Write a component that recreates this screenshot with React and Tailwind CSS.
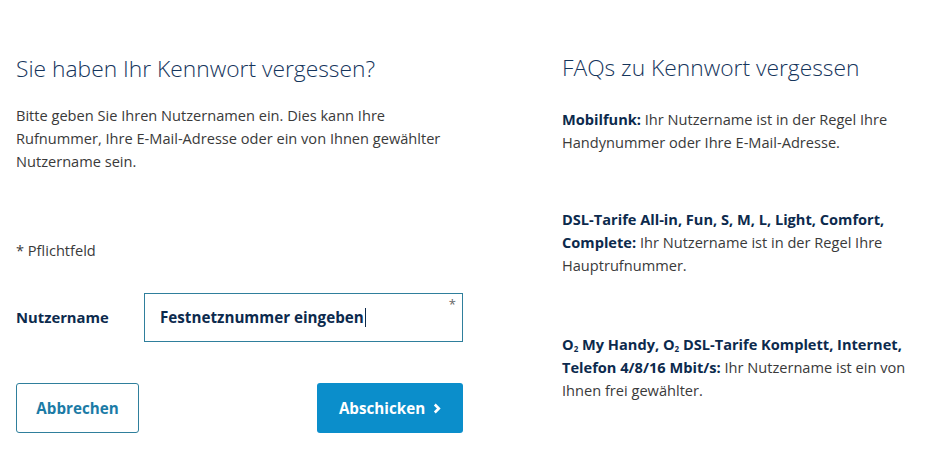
import React from "react";

const font = { fontFamily: '"Open Sans", "Noto Sans", sans-serif' };

const FaqItem = ({ title, children, className = "" }) => (
  <p className={"text-[14.6px] leading-[23px] text-[#3a3a3a] " + className}>
    <span className="font-bold text-[#0c2a4d]">{title}</span> {children}
  </p>
);

export default function App() {
  return (
    <div
      className="w-[929px] h-[454px] bg-white flex overflow-hidden font-['Open_Sans',_'Noto_Sans',_sans-serif]"
      style={font}
    >
      {/* Formular */}
      <div className="ml-4 w-[447px] pt-[54px] flex flex-col">
        <h1 className="text-[22.8px] leading-[30px] font-light text-[#15355c] whitespace-nowrap">
          Sie haben Ihr Kennwort vergessen?
        </h1>
        <p className="mt-[20px] text-[14.6px] leading-[23px] text-[#3a3a3a] whitespace-nowrap">
          Bitte geben Sie Ihren Nutzernamen ein. Dies kann Ihre
          <br />
          Rufnummer, Ihre E-Mail-Adresse oder ein von Ihnen gewählter
          <br />
          Nutzername sein.
        </p>
        <p className="mt-[66px] text-[14.6px] leading-[23px] text-[#3a3a3a]">* Pflichtfeld</p>

        <div className="mt-[31px] flex items-center">
          <label className="w-[128px] text-[14.8px] font-bold text-[#0c2a4d]">Nutzername</label>
          <div className="relative w-[319px] h-[49px] border border-[#2f7f9c] flex items-center pl-[15px]">
            <span className="text-[15.2px] font-bold text-[#0c2a4d]">Festnetznummer eingeben</span>
            <span className="w-px h-[19px] bg-[#0c2a4d] ml-px" />
            <span className="absolute right-[6px] top-[4px] text-[13px] leading-none text-[#666]">*</span>
          </div>
        </div>

        <div className="mt-[41px] flex justify-between">
          <button className="w-[123px] h-[50px] border border-[#2f7f9c] rounded-[3px] text-[15.2px] font-bold text-[#1b7ba6]">
            Abbrechen
          </button>
          <button className="w-[146px] h-[50px] rounded-[3px] bg-[#0b8ecb] text-white text-[15.2px] font-bold flex items-center justify-center gap-[8px]">
            Abschicken
            <svg width="8" height="11" viewBox="0 0 8 11" fill="none">
              <path d="M1.8 1.5 L5.8 5.5 L1.8 9.5" stroke="white" strokeWidth="2.6" />
            </svg>
          </button>
        </div>
      </div>

      {/* FAQs */}
      <div className="ml-[99px] pt-[53px] flex flex-col whitespace-nowrap">
        <h2 className="text-[22.8px] leading-[30px] font-light text-[#15355c]">
          FAQs zu Kennwort vergessen
        </h2>
        <FaqItem title="Mobilfunk:" className="mt-[25px]">
          Ihr Nutzername ist in der Regel Ihre
          <br />
          Handynummer oder Ihre E-Mail-Adresse.
        </FaqItem>
        <FaqItem
          title={
            <>
              DSL-Tarife All-in, Fun, S, M, L, Light, Comfort,
              <br />
              Complete:
            </>
          }
          className="mt-[54px]"
        >
          Ihr Nutzername ist in der Regel Ihre
          <br />
          Hauptrufnummer.
        </FaqItem>
        <FaqItem
          title={
            <>
              O<sub className="text-[8px]">2</sub> My Handy, O<sub className="text-[8px]">2</sub> DSL-Tarife
              Komplett, Internet,
              <br />
              Telefon 4/8/16 Mbit/s:
            </>
          }
          className="mt-[56px]"
        >
          Ihr Nutzername ist ein von
          <br />
          Ihnen frei gewählter.
        </FaqItem>
      </div>
    </div>
  );
}
